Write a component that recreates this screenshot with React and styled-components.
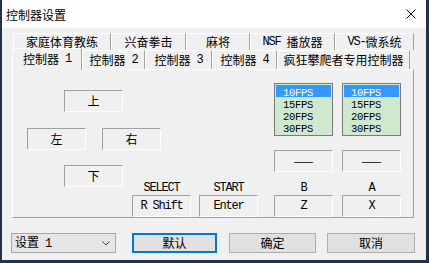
import React from 'react';
import styled, { createGlobalStyle } from 'styled-components';

const GlobalStyle = createGlobalStyle`
  html, body {
    margin: 0;
    padding: 0;
  }
  body {
    background: #f0f0f0;
    font-family: "Noto Sans CJK SC", "Liberation Sans", sans-serif;
    font-size: 12px;
    color: #000;
  }
`;

// window frame
const Window = styled.div`
  width: 429px;
  height: 263px;
  box-sizing: border-box;
  border-left: 2px solid #233246;
  border-right: 3px solid #233246;
  border-bottom: 3px solid #233246;
  background: #f0f0f0;
  display: flex;
  flex-direction: column;
`;

const TitleBar = styled.div`
  height: 28px;
  flex: none;
  background: #fff;
  display: flex;
  align-items: center;
  justify-content: space-between;
  padding: 0 10px 0 4px;
  font-size: 12px;
`;

const Body = styled.div`
  padding: 5px 0 0 10px;
`;

const Lat = styled.span`
  font-family: "Liberation Mono", monospace;
  font-size: ${(p) => (p.$small ? '10.5px' : '12px')};
  letter-spacing: ${(p) => (p.$small ? '-0.3px' : '-1.2px')};
  white-space: pre;
`;

const Mixed = ({ text }) =>
  text
    .split(/([\x20-\x7e]+)/)
    .filter(Boolean)
    .map((p, i) => (/^[\x20-\x7e]+$/.test(p) ? <Lat key={i}>{p}</Lat> : p));

// tabs
const TabRow = styled.div`
  display: flex;
  height: ${(p) => p.$h}px;
  margin-left: ${(p) => p.$indent}px;
  align-items: flex-end;
`;

const Tab = styled.div`
  width: ${(p) => p.$w}px;
  height: ${(p) => (p.$active ? 22 : p.$h)}px;
  box-sizing: border-box;
  flex: none;
  display: flex;
  align-items: center;
  justify-content: center;
  border-top: 1px solid #fff;
  border-left: 1px solid #fff;
  border-right: 1px solid #a0a0a0;
  background: #f0f0f0;
  white-space: nowrap;
  line-height: 1;
  ${(p) =>
    p.$active &&
    `
    position: relative;
    z-index: 1;
    margin-bottom: -1px;
    padding-bottom: 1px;
  `}
`;

const Panel = styled.div`
  width: 402px;
  height: 149px;
  box-sizing: border-box;
  border-top: 1px solid #fff;
  border-left: 1px solid #fff;
  border-right: 1px solid #a0a0a0;
  border-bottom: 1px solid #a0a0a0;
  padding: 13px 0 0 14px;
  display: flex;
  overflow: hidden;
`;

// controls inside panel
const LeftSide = styled.div`
  width: 231px;
  margin-top: 7px;
  display: flex;
  flex-direction: column;
`;

const Line = styled.div`
  display: flex;
  align-items: flex-start;
  gap: ${(p) => p.$gap || 0}px;
  margin-top: ${(p) => p.$top || 0}px;
  padding-left: ${(p) => p.$pad || 0}px;
`;

const KeyBox = styled.div`
  width: 59px;
  height: 22px;
  flex: none;
  box-sizing: border-box;
  border-top: 1px solid #a0a0a0;
  border-left: 1px solid #a0a0a0;
  border-right: 1px solid #fff;
  border-bottom: 1px solid #fff;
  display: flex;
  align-items: center;
  justify-content: center;
  line-height: 1;
  margin-top: ${(p) => p.$top || 0}px;
`;

const KeyGroup = styled.div`
  display: flex;
  gap: 8px;
  margin: 14px 0 0 9px;
`;

const KeyCol = styled.div`
  width: 59px;
  display: flex;
  flex-direction: column;
`;

const KeyLabel = styled.div`
  height: 14px;
  line-height: 14px;
  text-align: center;
  margin-top: ${(p) => p.$top || 0}px;
`;

const RightSide = styled.div`
  display: flex;
  gap: 9px;
  margin-left: 16px;
`;

const ListBox = styled.div`
  width: 59px;
  height: 53px;
  box-sizing: border-box;
  border: 1px solid #7a7a7a;
  background: #cfe9cf;
  padding: 1px 1px 0;
`;

const ListItem = styled.div`
  height: 12px;
  line-height: 12px;
  padding-left: 7px;
  background: ${(p) => (p.$sel ? '#3399ff' : 'transparent')};
  color: ${(p) => (p.$sel ? '#fff' : '#000')};
`;

// footer
const Footer = styled.div`
  display: flex;
  align-items: center;
  margin-top: 15px;
  padding-left: 9px;
`;

const Combo = styled.div`
  width: 105px;
  height: 20px;
  box-sizing: border-box;
  border: 1px solid #a8a8a8;
  background: #e5e5e5;
  display: flex;
  align-items: center;
  justify-content: space-between;
  padding: 0 5px 0 3px;
  line-height: 1;
`;

const Button = styled.div`
  width: ${(p) => p.$w}px;
  height: 20px;
  box-sizing: border-box;
  margin-left: ${(p) => p.$ml}px;
  border: ${(p) => (p.$primary ? '2px solid #0078d7' : '1px solid #adadad')};
  background: #e1e1e1;
  display: flex;
  align-items: center;
  justify-content: center;
  line-height: 1;
`;

const Close = () => (
  <svg width="10" height="10" viewBox="0 0 10 10">
    <path d="M0.5 0.5 L9.5 9.5 M9.5 0.5 L0.5 9.5" stroke="#000" strokeWidth="1" fill="none" />
  </svg>
);

const Chevron = () => (
  <svg width="8" height="5" viewBox="0 0 8 5">
    <polyline points="0.5,0.5 4,4 7.5,0.5" stroke="#444" strokeWidth="1" fill="none" />
  </svg>
);

const backTabs = [
  ['家庭体育教练', 98],
  ['兴奋拳击', 75],
  ['麻将', 64],
  ['NSF 播放器', 85],
  ['VS-微系统', 79],
];

const frontTabs = [
  ['控制器 1', 70, true],
  ['控制器 2', 63],
  ['控制器 3', 67],
  ['控制器 4', 65],
  ['疯狂攀爬者专用控制器', 133],
];

const fps = ['10FPS', '15FPS', '20FPS', '30FPS'];

const Speed = () => (
  <ListBox>
    {fps.map((f, i) => (
      <ListItem key={f} $sel={i === 0}>
        <Lat $small>{f}</Lat>
      </ListItem>
    ))}
  </ListBox>
);

export default function App() {
  return (
    <>
      <GlobalStyle />
      <Window>
        <TitleBar>
          <span>控制器设置</span>
          <Close />
        </TitleBar>
        <Body>
          <TabRow $h={17} $indent={1}>
            {backTabs.map(([t, w]) => (
              <Tab key={t} $w={w} $h={17}>
                <Mixed text={t} />
              </Tab>
            ))}
          </TabRow>
          <TabRow $h={19} $indent={0}>
            {frontTabs.map(([t, w, a]) => (
              <Tab key={t} $w={w} $h={19} $active={a}>
                <Mixed text={t} />
              </Tab>
            ))}
          </TabRow>
          <Panel>
            <LeftSide>
              <Line $pad={37}>
                <KeyBox>上</KeyBox>
              </Line>
              <Line $top={16} $gap={16}>
                <KeyBox>左</KeyBox>
                <KeyBox>右</KeyBox>
              </Line>
              <Line $top={15} $pad={37}>
                <KeyBox>下</KeyBox>
                <KeyGroup>
                  <KeyCol>
                    <KeyLabel><Lat>SELECT</Lat></KeyLabel>
                    <KeyBox $top={2}><Lat>R Shift</Lat></KeyBox>
                  </KeyCol>
                  <KeyCol>
                    <KeyLabel><Lat>START</Lat></KeyLabel>
                    <KeyBox $top={2}><Lat>Enter</Lat></KeyBox>
                  </KeyCol>
                </KeyGroup>
              </Line>
            </LeftSide>
            <RightSide>
              <KeyCol>
                <Speed />
                <KeyBox $top={14}>——</KeyBox>
                <KeyLabel $top={7}><Lat>B</Lat></KeyLabel>
                <KeyBox $top={2}><Lat>Z</Lat></KeyBox>
              </KeyCol>
              <KeyCol>
                <Speed />
                <KeyBox $top={14}>——</KeyBox>
                <KeyLabel $top={7}><Lat>A</Lat></KeyLabel>
                <KeyBox $top={2}><Lat>X</Lat></KeyBox>
              </KeyCol>
            </RightSide>
          </Panel>
        </Body>
        <Footer>
          <Combo>
            <span>
              <Mixed text="设置 1" />
            </span>
            <Chevron />
          </Combo>
          <Button $w={85} $ml={16} $primary>默认</Button>
          <Button $w={87} $ml={12}>确定</Button>
          <Button $w={88} $ml={11}>取消</Button>
        </Footer>
      </Window>
    </>
  );
}
